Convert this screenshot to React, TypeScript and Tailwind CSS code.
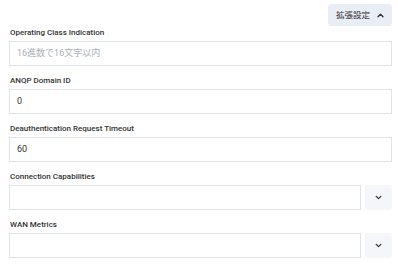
import React from "react";

const Chevron = ({ up = false }: { up?: boolean }) => (
  <svg width="7" height="5" viewBox="0 0 7 5" fill="none">
    {up ? (
      <path d="M1 3.8 L3.5 1.3 L6 3.8" stroke="#333" strokeWidth="1.3" strokeLinecap="round" strokeLinejoin="round" />
    ) : (
      <path d="M1.2 1.4 L3.5 3.6 L5.8 1.4" stroke="#333" strokeWidth="1.3" strokeLinecap="round" strokeLinejoin="round" />
    )}
  </svg>
);

const Field = ({ label, value, placeholder, select }: { label: string; value?: string; placeholder?: string; select?: boolean }) => (
  <div className="flex flex-col">
    <div className="text-[8px] font-medium text-[#333] leading-[10px] h-[10px] mb-[3px] pl-[1px]">{label}</div>
    <div className="flex gap-[4px]">
      <div className="flex-1 h-[25px] border border-[#dfe2e7] bg-white flex items-center px-[7px] text-[9px] text-[#333]">
        {value ? value : <span className="text-[#aab0b8]">{placeholder}</span>}
      </div>
      {select && (
        <div className="w-[27px] h-[25px] bg-[#f4f6fa] rounded-[3px] flex items-center justify-center">
          <Chevron />
        </div>
      )}
    </div>
  </div>
);

export default function App() {
  return (
    <div className="w-[398px] h-[270px] bg-white pl-[9px] pr-[6px] pt-[4px] overflow-hidden" style={{ fontFamily: 'Roboto, "Noto Sans CJK JP", sans-serif' }}>
      <div className="flex justify-end">
        <button className="h-[22px] px-[8px] bg-[#e9edf5] rounded-[3px] flex items-center gap-[7px] text-[8.5px] text-[#333]">
          <span>拡張設定</span>
          <Chevron up />
        </button>
      </div>
      <div className="flex flex-col gap-[10px] mt-[2px]">
        <Field label="Operating Class Indication" placeholder="16進数で16文字以内" />
        <Field label="ANQP Domain ID" value="0" />
        <Field label="Deauthentication Request Timeout" value="60" />
        <Field label="Connection Capabilities" select />
        <Field label="WAN Metrics" select />
      </div>
    </div>
  );
}
